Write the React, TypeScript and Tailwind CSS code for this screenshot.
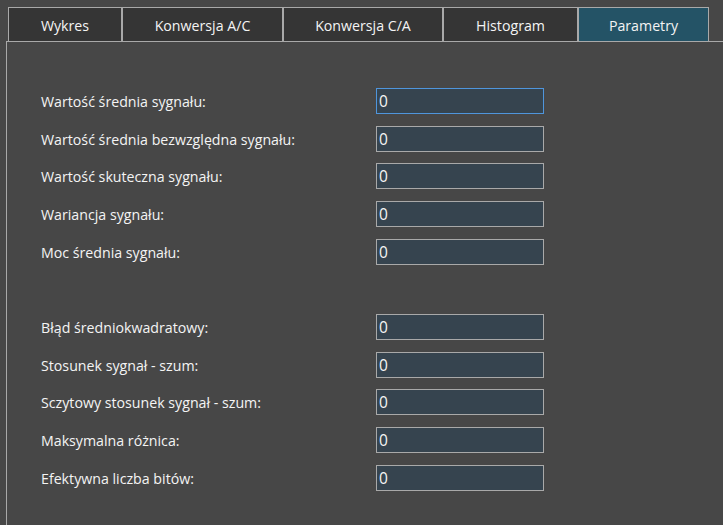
const tabs = [
  { label: 'Wykres', w: 'w-[114px]' },
  { label: 'Konwersja A/C', w: 'w-[161px]' },
  { label: 'Konwersja C/A', w: 'w-[160px]' },
  { label: 'Histogram', w: 'w-[135px]' },
  { label: 'Parametry', w: 'w-[131px]', active: true },
]

// mt classes reproduce the uneven 37/38px rhythm of the original form
const rows = [
  { label: 'Wartość średnia sygnału:', mt: 'mt-[46px]', focused: true },
  { label: 'Wartość średnia bezwzględna sygnału:', mt: 'mt-[12px]' },
  { label: 'Wartość skuteczna sygnału:', mt: 'mt-[11px]' },
  { label: 'Wariancja sygnału:', mt: 'mt-[12px]' },
  { label: 'Moc średnia sygnału:', mt: 'mt-[12px]' },
  { label: 'Błąd średniokwadratowy:', mt: 'mt-[49px]' },
  { label: 'Stosunek sygnał - szum:', mt: 'mt-[12px]' },
  { label: 'Sczytowy stosunek sygnał - szum:', mt: 'mt-[11px]' },
  { label: 'Maksymalna różnica:', mt: 'mt-[12px]' },
  { label: 'Efektywna liczba bitów:', mt: 'mt-[12px]' },
]

export default function App() {
  return (
    <div
      className="w-[723px] h-[525px] bg-[#474747] overflow-hidden flex flex-col text-[#f4f4f4]"
      style={{ fontFamily: '"Open Sans", "Noto Sans", sans-serif' }}
    >
      <div className="flex pt-[7px] pl-[8px] shrink-0">
        {tabs.map((t) => (
          <div
            key={t.label}
            className={`${t.w} h-[34px] pt-[2px] flex items-center justify-center border-t border-l border-r border-[#a9a9a9] text-[14.2px] ${
              t.active ? 'bg-[#245366]' : 'bg-[#353535]'
            }`}
          >
            {t.label}
          </div>
        ))}
      </div>

      <div className="flex-1 ml-[6px] border-l border-t border-[#a9a9a9] pl-[34px]">
        {rows.map((r) => (
          <div key={r.label} className={`${r.mt} flex items-center h-[26px]`}>
            <div className="w-[335px] pt-[1px] text-[14.2px]">{r.label}</div>
            <input
              readOnly
              value="0"
              className={`w-[168px] h-[26px] bg-[#36444f] border px-[2px] pb-[1px] text-[15.5px] text-[#f4f4f4] outline-none ${
                r.focused ? 'border-[#4f95dc]' : 'border-[#a9a9a9]'
              }`}
            />
          </div>
        ))}
      </div>
    </div>
  )
}
